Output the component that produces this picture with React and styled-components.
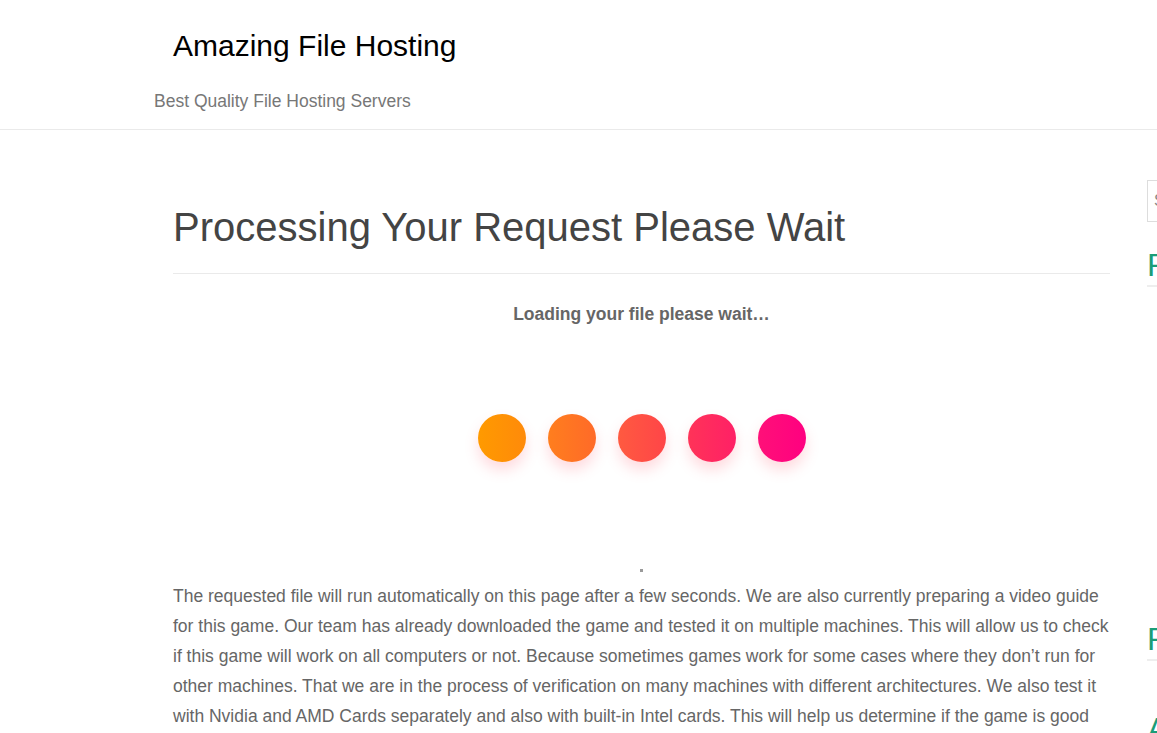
import styled, { createGlobalStyle } from "styled-components";

const Global = createGlobalStyle`
  html, body {
    margin: 0;
    padding: 0;
    background: #fff;
    overflow-x: hidden;
  }
  body {
    font-family: "Liberation Sans", Arial, sans-serif;
  }
`;

const Page = styled.div`
  width: 1157px;
  overflow: hidden;
`;

const Header = styled.header`
  height: 130px;
  border-bottom: 1px solid #eaeaea;
  box-sizing: border-box;
  display: flex;
  flex-direction: column;
`;

const SiteTitle = styled.h1`
  margin: 28px 0 0 173px;
  font-size: 30px;
  font-weight: 400;
  line-height: 36px;
  color: #000;
`;

const Tagline = styled.p`
  margin: 25px 0 0 154px;
  font-size: 17.5px;
  line-height: 24px;
  color: #777;
`;

const Body = styled.div`
  display: flex;
  align-items: flex-start;
  padding-left: 173px;
`;

const Content = styled.main`
  width: 937px;
  flex-shrink: 0;
  padding-top: 72px;
`;

const Title = styled.h2`
  margin: 0;
  padding-bottom: 21px;
  font-size: 40px;
  font-weight: 400;
  line-height: 50px;
  color: #444;
  border-bottom: 1px solid #eaeaea;
`;

const Loading = styled.p`
  margin: 30px 0 0;
  text-align: center;
  font-size: 17.5px;
  font-weight: 700;
  color: #666;
`;

const Dots = styled.div`
  display: flex;
  justify-content: center;
  gap: 22px;
  margin-top: 89px;
  padding-left: 1px;
`;

const Dot = styled.span`
  width: 48px;
  height: 48px;
  border-radius: 50%;
  background: linear-gradient(90deg, ${(p) => p.$from}, ${(p) => p.$to});
  box-shadow: 0 8px 14px rgba(255, 90, 110, 0.22);
`;

const Pixel = styled.span`
  display: block;
  width: 3px;
  height: 3px;
  margin: 107px 0 0 467px;
  background: #9a9a9a;
`;

const Text = styled.p`
  margin: 9px 0 0;
  font-size: 17.5px;
  line-height: 30px;
  color: #666;
`;

const Sidebar = styled.aside`
  margin-left: 37px;
  width: 300px;
  flex-shrink: 0;
  padding-top: 50px;
`;

const Search = styled.input`
  display: block;
  box-sizing: border-box;
  width: 100%;
  height: 42px;
  border: 1px solid #ddd;
  padding: 0 6px;
  font-family: "Liberation Sans", Arial, sans-serif;
  font-size: 16px;
  color: #888;
  &::placeholder {
    color: #888;
  }
`;

const Widget = styled.h3`
  margin: ${(p) => p.$top}px 0 0;
  padding-bottom: 2px;
  font-size: 32px;
  font-weight: 400;
  line-height: 36px;
  color: #1a9d78;
  border-bottom: 2px solid #eee;
`;

const dots = [
  ["#ff9a00", "#ff8a0a"],
  ["#ff7e1e", "#ff6a28"],
  ["#ff5a40", "#ff4548"],
  ["#ff3358", "#ff2066"],
  ["#ff1078", "#ff0080"],
];

const App = () => {
  return (
    <Page>
      <Global />
      <Header>
        <SiteTitle>Amazing File Hosting</SiteTitle>
        <Tagline>Best Quality File Hosting Servers</Tagline>
      </Header>
      <Body>
        <Content>
          <Title>Processing Your Request Please Wait</Title>
          <Loading>Loading your file please wait…</Loading>
          <Dots>
            {dots.map(([a, b], i) => (
              <Dot key={i} $from={a} $to={b} />
            ))}
          </Dots>
          <Pixel />
          <Text>
            The requested file will run automatically on this page after a few seconds. We are also
            currently preparing a video guide for this game. Our team has already downloaded the game
            and tested it on multiple machines. This will allow us to check if this game will work on
            all computers or not. Because sometimes games work for some cases where they don’t run for
            other machines. That we are in the process of verification on many machines with different
            architectures. We also test it with Nvidia and AMD Cards separately and also with built-in
            Intel cards. This will help us determine if the game is good for all systems.
          </Text>
        </Content>
        <Sidebar>
          <Search placeholder="Search …" />
          <Widget $top={25}>Recent Posts</Widget>
          <Widget $top={334}>Recent Comments</Widget>
          <Widget $top={50}>Archives</Widget>
        </Sidebar>
      </Body>
    </Page>
  );
};

export default App;
